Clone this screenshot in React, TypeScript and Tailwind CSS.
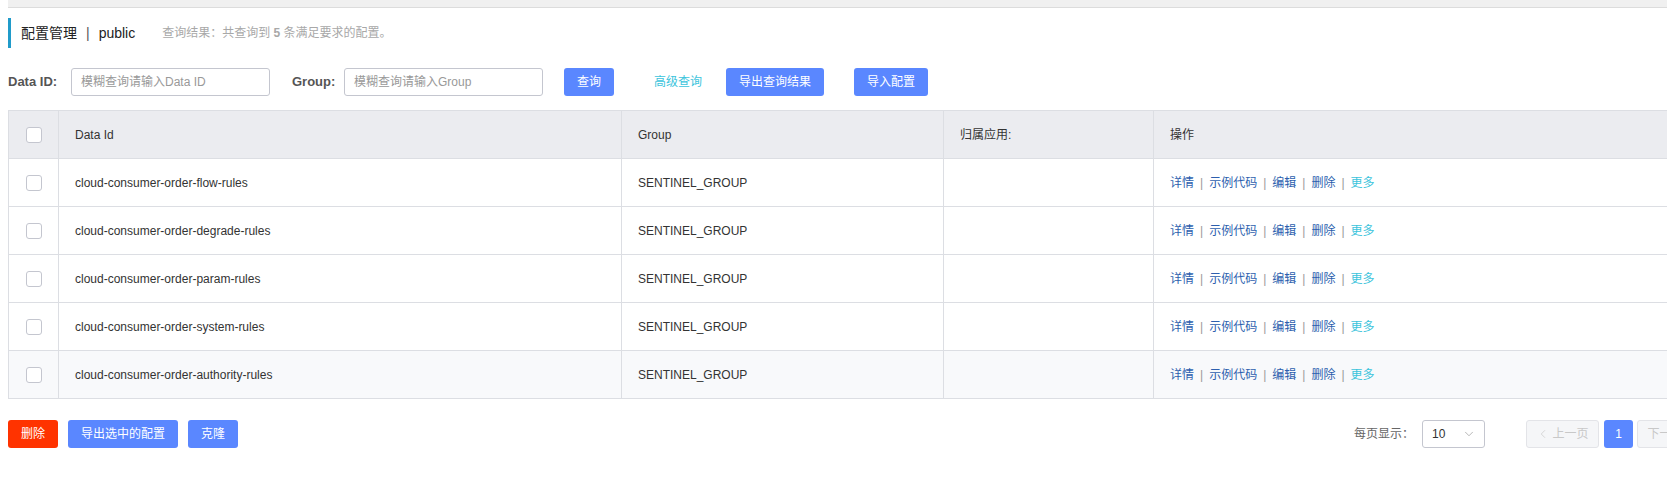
import { ChevronDown, ChevronLeft, ChevronRight } from "lucide-react";

interface ConfigRow {
  dataId: string;
  group: string;
  app: string;
}

const rows: ConfigRow[] = [
  { dataId: "cloud-consumer-order-flow-rules", group: "SENTINEL_GROUP", app: "" },
  { dataId: "cloud-consumer-order-degrade-rules", group: "SENTINEL_GROUP", app: "" },
  { dataId: "cloud-consumer-order-param-rules", group: "SENTINEL_GROUP", app: "" },
  { dataId: "cloud-consumer-order-system-rules", group: "SENTINEL_GROUP", app: "" },
  { dataId: "cloud-consumer-order-authority-rules", group: "SENTINEL_GROUP", app: "" },
];

const font = "font-['Liberation_Sans','Noto_Sans_CJK_SC',sans-serif]";

const Checkbox = () => (
  <span className="block w-4 h-4 rounded-[3px] border border-[#c4c6cf] bg-white" />
);

const Sep = () => <span className="mx-[6px] text-[#999]">|</span>;

const App = () => {
  return (
    <div className={`w-[1667px] h-[488px] overflow-hidden bg-white text-[12px] text-[#333] ${font}`}>
      {/* top strip */}
      <div className="ml-2 w-[1760px] h-2 bg-[#f0f0f0] border-b border-[#dcdcdc]" />

      <div className="ml-2 w-[1702px]">
        {/* Title */}
        <div className="mt-[10px] h-[30px] flex items-center border-l-[3px] border-[#209bca] pl-[10px]">
          <span className="text-[14px] text-[#222]">配置管理</span>
          <span className="text-[14px] text-[#555] mx-[9px]">|</span>
          <span className="text-[14px] text-[#222]">public</span>
          <span className="ml-[27px] text-[12px] text-[#a8a8a8]">
            查询结果：共查询到 <b className="font-bold">5</b> 条满足要求的配置。
          </span>
        </div>

        {/* Search row */}
        <div className="mt-5 h-7 flex items-center">
          <span className="w-[63px] text-[13px] font-bold text-[#555]">Data ID:</span>
          <div className="w-[199px] h-7 border border-[#c4c6cf] rounded-[3px] flex items-center pl-[9px] text-[#999]">
            模糊查询请输入Data ID
          </div>
          <span className="ml-[22px] w-[52px] text-[13px] font-bold text-[#555]">Group:</span>
          <div className="w-[199px] h-7 border border-[#c4c6cf] rounded-[3px] flex items-center pl-[9px] text-[#999]">
            模糊查询请输入Group
          </div>
          <button className="ml-[21px] w-[50px] h-7 rounded-[3px] bg-[#5a87ff] text-white">查询</button>
          <span className="ml-[40px] text-[#3cc4dc]">高级查询</span>
          <button className="ml-[24px] w-[98px] h-7 rounded-[3px] bg-[#5a87ff] text-white">导出查询结果</button>
          <button className="ml-[30px] w-[74px] h-7 rounded-[3px] bg-[#5a87ff] text-white">导入配置</button>
        </div>

        {/* Table */}
        <table className="mt-[14px] w-full border-collapse border border-[#dcdee3] table-fixed">
          <colgroup>
            <col className="w-[50px]" />
            <col className="w-[563px]" />
            <col className="w-[322px]" />
            <col className="w-[210px]" />
            <col />
          </colgroup>
          <thead>
            <tr className="h-12 bg-[#ebecf0] text-left">
              <th className="border border-[#dcdee3] font-normal">
                <div className="flex justify-center"><Checkbox /></div>
              </th>
              <th className="border border-[#dcdee3] px-4 font-normal">Data Id</th>
              <th className="border border-[#dcdee3] px-4 font-normal">Group</th>
              <th className="border border-[#dcdee3] px-4 font-normal">归属应用:</th>
              <th className="border border-[#dcdee3] px-4 font-normal">操作</th>
            </tr>
          </thead>
          <tbody>
            {rows.map((row, i) => (
              <tr key={row.dataId} className={`h-12 ${i === rows.length - 1 ? "bg-[#f8f9fb]" : "bg-white"}`}>
                <td className="border border-[#dcdee3]">
                  <div className="flex justify-center"><Checkbox /></div>
                </td>
                <td className="border border-[#dcdee3] px-4">{row.dataId}</td>
                <td className="border border-[#dcdee3] px-4">{row.group}</td>
                <td className="border border-[#dcdee3] px-4">{row.app}</td>
                <td className="border border-[#dcdee3] px-4 text-[#2d5fae]">
                  <span>详情</span>
                  <Sep />
                  <span>示例代码</span>
                  <Sep />
                  <span>编辑</span>
                  <Sep />
                  <span>删除</span>
                  <Sep />
                  <span className="text-[#3cc4dc]">更多</span>
                </td>
              </tr>
            ))}
          </tbody>
        </table>

        {/* Footer */}
        <div className="mt-[21px] h-7 flex items-center">
          <button className="w-[50px] h-7 rounded-[3px] bg-[#ff3300] text-white">删除</button>
          <button className="ml-[10px] w-[110px] h-7 rounded-[3px] bg-[#5a87ff] text-white">导出选中的配置</button>
          <button className="ml-[10px] w-[50px] h-7 rounded-[3px] bg-[#5a87ff] text-white">克隆</button>

          <div className="ml-auto flex items-center">
            <span className="text-[#666]">每页显示：</span>
            <div className="ml-[8px] w-[63px] h-7 border border-[#c4c6cf] rounded-[3px] flex items-center justify-between pl-[9px] pr-[8px] text-[#333]">
              <span>10</span>
              <ChevronDown size={14} strokeWidth={1.2} className="text-[#999]" />
            </div>
            <div className="ml-[41px] w-[73px] h-7 border border-[#e3e4e8] bg-[#f5f6f8] rounded-[3px] flex items-center justify-center text-[#c8c8c8]">
              <ChevronLeft size={14} strokeWidth={1.2} />
              <span className="ml-[2px]">上一页</span>
            </div>
            <div className="ml-[5px] w-[29px] h-7 rounded-[3px] bg-[#5a87ff] text-white flex items-center justify-center">1</div>
            <div className="ml-[4px] w-[73px] h-7 border border-[#e3e4e8] bg-[#f5f6f8] rounded-[3px] flex items-center justify-center text-[#c8c8c8]">
              <span className="mr-[2px]">下一页</span>
              <ChevronRight size={14} strokeWidth={1.2} />
            </div>
          </div>
        </div>
      </div>
    </div>
  );
};

export default App;
